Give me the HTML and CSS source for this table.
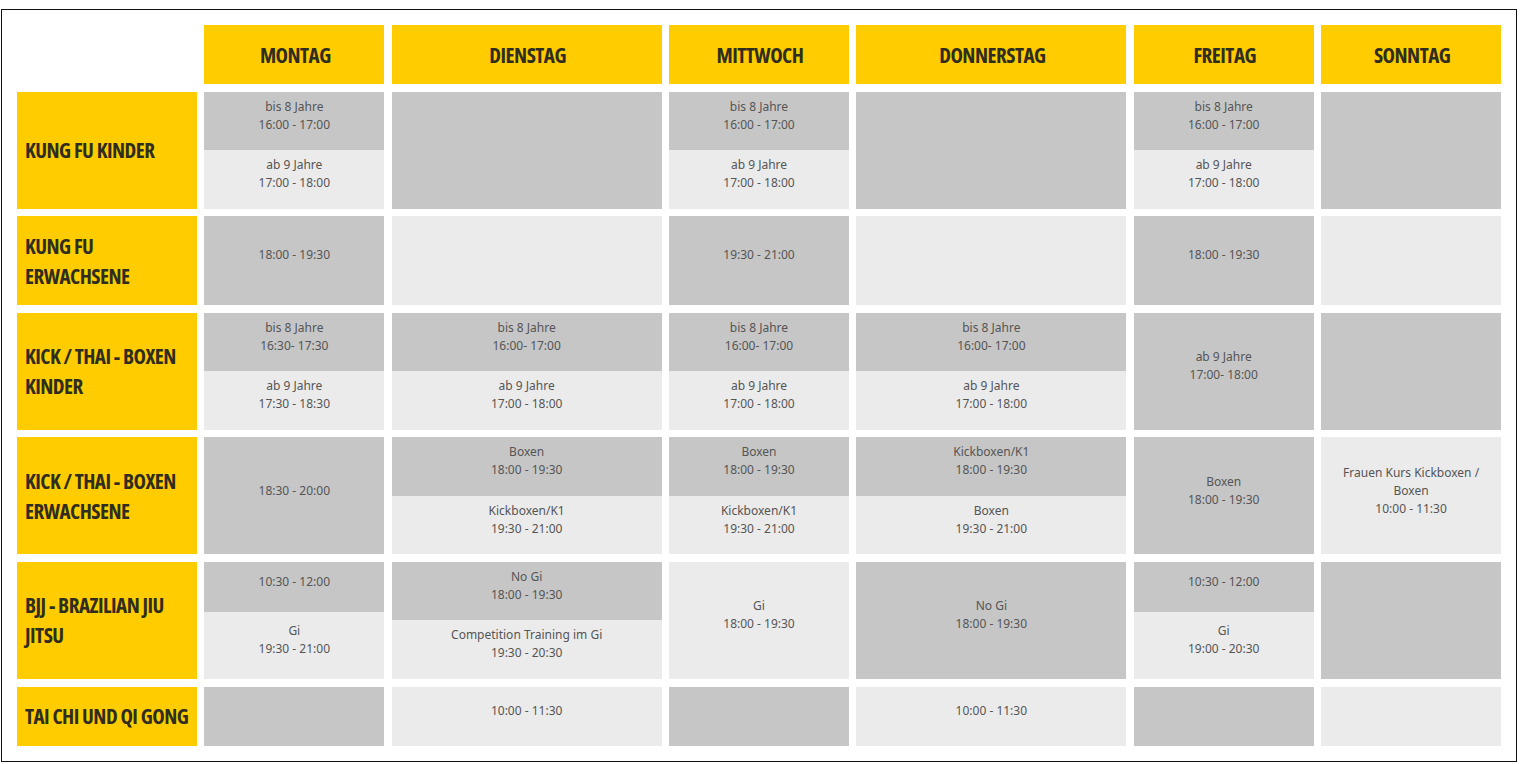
FILE: index.html
```html
<!DOCTYPE html>
<html lang="de">
<head>
<meta charset="utf-8">
<title>Stundenplan</title>
<link rel="stylesheet" href="styles.css">
</head>
<body>
<div class="frame">
  <div class="schedule">
    <div class="corner"></div>
    <div class="day">MONTAG</div>
    <div class="day">DIENSTAG</div>
    <div class="day">MITTWOCH</div>
    <div class="day">DONNERSTAG</div>
    <div class="day">FREITAG</div>
    <div class="day">SONNTAG</div>

    <!-- Row 1 -->
    <div class="label">KUNG FU KINDER</div>
    <div class="split"><div class="sub dark">bis 8 Jahre<br>16:00 - 17:00</div><div class="sub light fill">ab 9 Jahre<br>17:00 - 18:00</div></div>
    <div class="cell dark"></div>
    <div class="split"><div class="sub dark">bis 8 Jahre<br>16:00 - 17:00</div><div class="sub light fill">ab 9 Jahre<br>17:00 - 18:00</div></div>
    <div class="cell dark"></div>
    <div class="split"><div class="sub dark">bis 8 Jahre<br>16:00 - 17:00</div><div class="sub light fill">ab 9 Jahre<br>17:00 - 18:00</div></div>
    <div class="cell dark"></div>

    <!-- Row 2 -->
    <div class="label">KUNG FU<br>ERWACHSENE</div>
    <div class="cell dark">18:00 - 19:30</div>
    <div class="cell light"></div>
    <div class="cell dark">19:30 - 21:00</div>
    <div class="cell light"></div>
    <div class="cell dark">18:00 - 19:30</div>
    <div class="cell light"></div>

    <!-- Row 3 -->
    <div class="label">KICK / THAI - BOXEN KINDER</div>
    <div class="split"><div class="sub dark">bis 8 Jahre<br>16:30- 17:30</div><div class="sub light fill">ab 9 Jahre<br>17:30 - 18:30</div></div>
    <div class="split"><div class="sub dark">bis 8 Jahre<br>16:00- 17:00</div><div class="sub light fill">ab 9 Jahre<br>17:00 - 18:00</div></div>
    <div class="split"><div class="sub dark">bis 8 Jahre<br>16:00- 17:00</div><div class="sub light fill">ab 9 Jahre<br>17:00 - 18:00</div></div>
    <div class="split"><div class="sub dark">bis 8 Jahre<br>16:00- 17:00</div><div class="sub light fill">ab 9 Jahre<br>17:00 - 18:00</div></div>
    <div class="cell dark">ab 9 Jahre<br>17:00- 18:00</div>
    <div class="cell dark"></div>

    <!-- Row 4 -->
    <div class="label">KICK / THAI - BOXEN ERWACHSENE</div>
    <div class="cell dark">18:30 - 20:00</div>
    <div class="split"><div class="sub dark">Boxen<br>18:00 - 19:30</div><div class="sub light fill">Kickboxen/K1<br>19:30 - 21:00</div></div>
    <div class="split"><div class="sub dark">Boxen<br>18:00 - 19:30</div><div class="sub light fill">Kickboxen/K1<br>19:30 - 21:00</div></div>
    <div class="split"><div class="sub dark">Kickboxen/K1<br>18:00 - 19:30</div><div class="sub light fill">Boxen<br>19:30 - 21:00</div></div>
    <div class="cell dark">Boxen<br>18:00 - 19:30</div>
    <div class="cell light">Frauen Kurs Kickboxen / Boxen<br>10:00 - 11:30</div>

    <!-- Row 5 -->
    <div class="label">BJJ - BRAZILIAN JIU JITSU</div>
    <div class="split"><div class="sub dark">10:30 - 12:00</div><div class="sub light fill">Gi<br>19:30 - 21:00</div></div>
    <div class="split"><div class="sub dark">No Gi<br>18:00 - 19:30</div><div class="sub light fill">Competition Training im Gi<br>19:30 - 20:30</div></div>
    <div class="cell light">Gi<br>18:00 - 19:30</div>
    <div class="cell dark">No Gi<br>18:00 - 19:30</div>
    <div class="split"><div class="sub dark">10:30 - 12:00</div><div class="sub light fill">Gi<br>19:00 - 20:30</div></div>
    <div class="cell dark"></div>

    <!-- Row 6 -->
    <div class="label">TAI CHI UND QI GONG</div>
    <div class="cell dark"></div>
    <div class="cell light">10:00 - 11:30</div>
    <div class="cell dark"></div>
    <div class="cell light">10:00 - 11:30</div>
    <div class="cell dark"></div>
    <div class="cell light"></div>
  </div>
</div>
</body>
</html>
```

FILE: styles.css
```css
html, body {
  margin: 0;
  padding: 0;
  background: #ffffff;
}

body {
  padding: 9px 0 0 1px;
}

.frame {
  box-sizing: border-box;
  width: 1516px;
  border: 1px solid #111111;
  padding: 15px;
  background: #ffffff;
}

.schedule {
  display: grid;
  grid-template-columns: 2fr 2fr 3fr 2fr 3fr 2fr 2fr;
  gap: 7.6px;
}

.corner {
  background: #ffffff;
}

.day,
.label {
  background: #ffcc00;
  color: #2f2d1f;
  font-family: "Open Sans", "DejaVu Sans", sans-serif;
  font-stretch: 75%;
  font-weight: 700;
  font-size: 21px;
  letter-spacing: -0.5px;
  line-height: 30px;
  padding: 14.5px 6px 14.5px 8px;
  box-sizing: border-box;
}

.day {
  text-align: center;
}

.label {
  display: flex;
  align-items: center;
}

.cell,
.sub {
  box-sizing: border-box;
  display: flex;
  flex-direction: column;
  justify-content: center;
  text-align: center;
  padding: 6px 12px 16.5px;
  font-family: "Noto Sans", "DejaVu Sans", sans-serif;
  font-size: 12px;
  line-height: 18px;
  color: #555555;
}

.split {
  display: flex;
  flex-direction: column;
}

.sub {
  min-height: 50px;
  flex: none;
}

.sub.fill {
  flex: 1 1 auto;
}

.dark {
  background: #c6c6c6;
}

.light {
  background: #ebebeb;
}
```
